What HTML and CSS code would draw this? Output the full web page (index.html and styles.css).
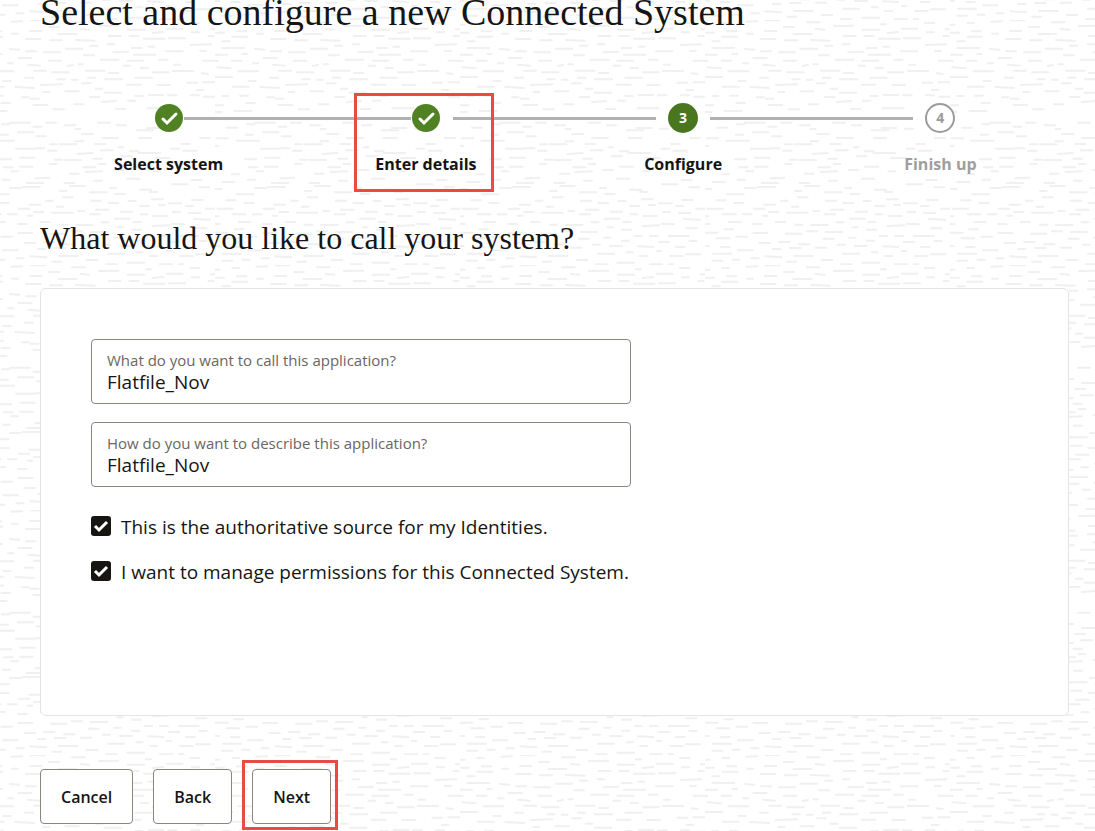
FILE: index.html
```html
<!DOCTYPE html>
<html lang="en">
<head>
    <meta charset="UTF-8">
    <meta name="viewport" content="width=device-width, initial-scale=1.0">
    <title>Connected System</title>
    <link rel="stylesheet" href="styles.css">
</head>
<body>
    <main class="page">
        <h1 class="title">Select and configure a new Connected System</h1>

        <ol class="steps">
            <li class="step done">
                <div class="track">
                    <span class="line hidden"></span>
                    <svg class="mark" viewBox="0 0 30 30"><circle cx="15" cy="15" r="14"/><path d="M9 16l4 4 9-9"/></svg>
                    <span class="line near"></span>
                </div>
                <span class="name">Select system</span>
            </li>
            <li class="step done focus">
                <div class="track">
                    <span class="line near"></span>
                    <svg class="mark" viewBox="0 0 30 30"><circle cx="15" cy="15" r="14"/><path d="M9 16l4 4 9-9"/></svg>
                    <span class="line"></span>
                </div>
                <span class="name">Enter details</span>
            </li>
            <li class="step current">
                <div class="track">
                    <span class="line"></span>
                    <span class="number">3</span>
                    <span class="line"></span>
                </div>
                <span class="name">Configure</span>
            </li>
            <li class="step next">
                <div class="track">
                    <span class="line"></span>
                    <span class="number">4</span>
                    <span class="line hidden"></span>
                </div>
                <span class="name">Finish up</span>
            </li>
        </ol>

        <h2 class="question">What would you like to call your system?</h2>

        <form class="systemForm">
            <div class="card">
                <div class="field">
                    <label for="appName">What do you want to call this application?</label>
                    <input type="text" id="appName" value="Flatfile_Nov">
                </div>
                <div class="field">
                    <label for="appDesc">How do you want to describe this application?</label>
                    <input type="text" id="appDesc" value="Flatfile_Nov">
                </div>
                <div class="check">
                    <input type="checkbox" id="authoritative" checked>
                    <label for="authoritative">This is the authoritative source for my Identities.</label>
                </div>
                <div class="check">
                    <input type="checkbox" id="permissions" checked>
                    <label for="permissions">I want to manage permissions for this Connected System.</label>
                </div>
            </div>
            <div class="buttons">
                <button type="button">Cancel</button>
                <button type="button">Back</button>
                <button type="button" class="focus">Next</button>
            </div>
        </form>
    </main>
</body>
</html>
```
FILE: styles.css
```css
*, *::after {padding: 0; margin: 0; box-sizing: border-box;}
ul, ol, li {list-style: none;}

body {
    color: #161513;
    font-family: "Open Sans", "Noto Sans", sans-serif;
    background-color: #fff;
    /* short brush strokes, one 245px tile */
    background-image: url("data:image/svg+xml,%3Csvg xmlns='http://www.w3.org/2000/svg' width='245' height='245' viewBox='0 0 735 735'%3E%3Cpath fill='none' stroke='%23f0f0f0' stroke-width='6' stroke-linecap='round' d='M124 5l33-1M182 1h42M52 9h20M306 7h38M0 14h14M387 18l58-1M527 13h16M660 9h28M237 21h30M66 34h28M3 38h24M180 33h34M126 41h18M265 42h54M332 27l26 2M473 29h50M590 26h48M548 39l32-3M665 37h22M722 28h13M52 50h45M168 57h44M22 64h22M240 61h36M318 60l56 2M416 48h36M478 48h28M522 56h62M597 55h48M715 48h16M360 77h22M413 73h20M662 75l62-2M535 80h18M485 84h30M22 84h66M120 87l28 2M287 86h50M168 94h30M222 97h48M342 106h30M430 97l44-2M588 94h50M690 93h18M0 104h36M82 102h14M492 104h64M145 114h40M0 123h8M50 122h30M236 122h38M392 119h54M567 119h26M700 122h35M114 130h16M174 134l36 3M460 137h20M325 133h14M472 122h48M612 134h18M7 142l40 3M293 138l16-3M512 144h22M70 154h60M192 152h36M246 157h50M348 152h56M417 159h28M548 157h48M608 153h62M695 160l18 2M0 171h52M165 173h24M354 173h22M496 173h50M100 183h22M262 178h22M305 179h18M405 178h52M213 195l64-2M336 190h26M470 194h42M562 195h38M652 188h30M700 187h35M53 200h48M136 201l56 3M220 216h18M286 214h40M377 206h20M404 218h50M680 210h20M22 228h18M75 227h24M156 232h20M182 236h24M360 231h28M496 228h22M536 225h44M594 226h26M662 226h26M702 230h33M94 249h26M396 246l42-3M474 242h22M0 256h25M190 255h42M312 253h28M250 268h32M438 267h28M532 265h64M58 273h52M0 276h20M36 323h30M120 308h60M96 313h22M190 320h24M228 308h30M285 316h30M384 308h36M316 327h16M440 316h28M530 324h44M500 331h50M600 326h24M144 337h46M92 344h22M336 342h34M200 349h28M396 354h48M506 354h38M5 355h34M64 362h68M0 378h10M316 364h24M138 386h54M196 385h28M240 373h20M268 373h52M376 372h30M446 382h14M505 399h66M604 386h24M234 392h26M322 402l46-3M392 391h36M480 394h26M634 372h26M690 354h30M640 392h40M90 418h34M150 413h44M254 419h22M283 420h50M370 416h26M455 409h30M558 414h42M150 440h38M102 442h26M240 432h20M340 442h36M386 432h20M480 440h40M430 450h30M550 454h20M50 463h22M124 454h20M196 475l42-2M346 456l50-2M300 461h26M470 476h38M98 479h22M170 489h50M22 486h36M283 489h30M372 482h24M606 493h46M158 501h52M120 504h32M270 513h20M300 498h44M420 504h18M510 509h34M665 480h30M540 516h22M66 523h50M360 517h50M436 522h28M688 502h30M0 507h20M278 532h30M34 541h28M88 549h28M228 542h20M362 542h32M415 548l30 2M475 543h22M545 538h34M597 550h38M666 540h32M178 554h32M510 558h28M567 555h18M648 558h22M260 560h20M8 566h46M146 566h32M325 573h18M378 569h38M192 576h28M246 578h62M452 575h34M608 576h22M657 579h34M708 566h27M52 583h40M114 583h26M173 587h14M360 583h30M512 583h20M550 588h40M0 589h10M72 606h34M435 596h44M672 597l48 2M144 612h26M212 606h28M270 614h22M318 615h50M394 607h22M490 606h22M548 618l50-2M606 611l36 2M0 612h14M442 622h16M58 628h26M678 625h32M486 629h28M0 638h38M145 639h42M243 641h46M306 634h30M362 636h50M94 650h32M34 655h38M524 648h22M570 648h24M626 648h60M432 653h20M356 656h30M163 669h32M222 666h32M486 662h22M596 666h32M688 663h22M282 673h32M398 674h22M0 678h12M48 681h26M450 678h36M534 679l46 2M648 681h26M332 683h32M255 684h32M204 687h22M99 691h44M590 693h14M24 701h54M500 697h18M414 701h48M181 709l48 3M267 708h56M540 708h22M630 708h38M677 703h44M139 715h22M82 719h22M22 722h30M350 720h32M247 725h26M472 728h50M408 733h32M570 733h36M626 733h14'/%3E%3C/svg%3E");
    background-position: -30px 20px;
}

.page {padding: 0 26px 6px 40px;}
.title, .question {font-family: Georgia, "Liberation Serif", serif; font-weight: 400;}
.title {margin-top: -12px; font-size: 38px; line-height: 48px;}
.question {margin-top: 38px; font-size: 32px; line-height: 48px;}

.steps {display: grid; grid-template-columns: repeat(4, 1fr); margin-top: 67px;}
.step {position: relative; text-align: center;}
.track {display: grid; grid-template-columns: 1fr 30px 1fr; align-items: center;}
.line {height: 3px; margin-right: 12px; background: #b1b1b1;}
.line:last-child {margin-right: 0; margin-left: 12px;}
.line.near {margin-right: 0;}
.line.near:last-child {margin-left: 0;}
.line.hidden {visibility: hidden;}
.mark {width: 30px; height: 30px; fill: #508223;}
.mark path {fill: none; stroke: #fff; stroke-width: 3; stroke-linecap: round;}
.number {width: 30px; height: 30px; border: 2px solid #4a7620; border-radius: 50%; background: #4a7620; color: #fff; font-size: 14px; font-weight: 700; line-height: 26px;}
.next .number {border-color: #9b9b9b; background: #fff; color: #9b9b9b;}
.name {display: block; margin-top: 19px; font-size: 16px; font-weight: 700; line-height: 24px;}
.next .name {color: #9e9e9e;}

/* red call-out frames */
.focus {position: relative;}
.focus::after {content: ""; position: absolute; border: 3px solid #ea4a44; pointer-events: none;}
.step.focus::after {top: -10px; bottom: -16px; left: 50%; width: 140px; margin-left: -72px;}
.buttons .focus::after {top: -10px; right: -8px; bottom: -7px; left: -11px;}

.card {min-height: 428px; margin-top: 26px; padding: 50px; border: 1px solid #e4e4e4; border-radius: 6px; background: #fff;}
.field {max-width: 540px; height: 65px; margin-bottom: 18px; padding: 9px 15px; border: 1px solid #8b8580; border-radius: 4px;}
.field label {display: block; color: #6b6661; font-size: 15px; line-height: 22px;}
.field input {display: block; width: 100%; height: 22px; border: 0; outline: 0; background: none; color: #161513; font: inherit; font-size: 19px; line-height: 22px;}
.check {display: flex; align-items: flex-start; gap: 10px; margin-top: 17px;}
.field + .check {margin-top: 26px;}
.check input {appearance: none; width: 20px; height: 20px; margin-top: 3px; border-radius: 3px; background: #161513 url("data:image/svg+xml,%3Csvg xmlns='http://www.w3.org/2000/svg' viewBox='0 0 20 20'%3E%3Cpath d='M4 10l4 4 8-8' fill='none' stroke='%23fff' stroke-width='3'/%3E%3C/svg%3E");}
.check label {font-size: 19px; line-height: 28px;}

.buttons {display: flex; gap: 20px; margin-top: 53px;}
.buttons button {height: 55px; padding: 0 20px; border: 1px solid #8b8580; border-radius: 4px; background: #fff; color: #161513; font: inherit; font-size: 16px; font-weight: 600;}
```
